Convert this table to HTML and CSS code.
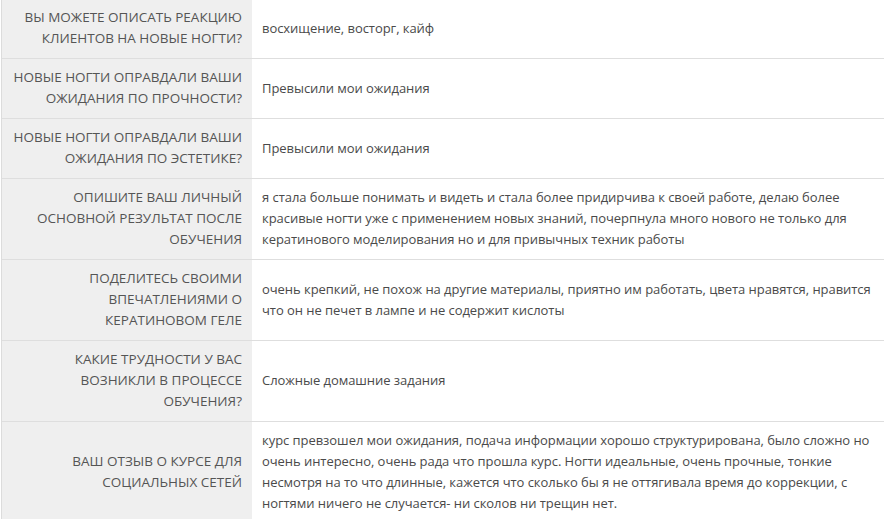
FILE: index.html
```html
<!DOCTYPE html>
<html lang="ru">
<head>
<meta charset="utf-8">
<link rel="stylesheet" href="styles.css">
</head>
<body>
<table class="qa">
  <tr><th class="q">Вы можете описать реакцию клиентов на новые ногти?</th><td class="a">восхищение, восторг, кайф</td></tr>
  <tr><th class="q">Новые ногти оправдали ваши ожидания по прочности?</th><td class="a">Превысили мои ожидания</td></tr>
  <tr><th class="q">Новые ногти оправдали ваши ожидания по эстетике?</th><td class="a">Превысили мои ожидания</td></tr>
  <tr><th class="q">Опишите ваш личный основной результат после обучения</th><td class="a">я стала больше понимать и видеть и стала более придирчива к своей работе, делаю более красивые ногти уже с применением новых знаний, почерпнула много нового не только для кератинового моделирования но и для привычных техник работы</td></tr>
  <tr><th class="q">Поделитесь своими впечатлениями о кератиновом геле</th><td class="a">очень крепкий, не похож на другие материалы, приятно им работать, цвета нравятся, нравится что он не печет в лампе и не содержит кислоты</td></tr>
  <tr><th class="q">Какие трудности у вас возникли в процессе обучения?</th><td class="a">Сложные домашние задания</td></tr>
  <tr><th class="q">Ваш отзыв о курсе для социальных сетей</th><td class="a">курс превзошел мои ожидания, подача информации хорошо структурирована, было сложно но очень интересно, очень рада что прошла курс. Ногти идеальные, очень прочные, тонкие несмотря на то что длинные, кажется что сколько бы я не оттягивала время до коррекции, с ногтями ничего не случается- ни сколов ни трещин нет.</td></tr>
</table>
</body>
</html>
```

FILE: styles.css
```css
html, body {
  margin: 0;
  padding: 0;
  background: #ffffff;
}
body {
  padding-left: 1px;
  font-family: "Open Sans", "Liberation Sans", sans-serif;
  color: #4a4a4a;
}
.qa {
  border-collapse: collapse;
  width: 883px;
  margin-top: -2px;
}
.qa tr {
  border-top: 1px solid #dedede;
}
.qa th, .qa td {
  vertical-align: middle;
  line-height: 21px;
  padding: 8px 10px 9px 10px;
}
.q {
  width: 230px;
  background: #efefef;
  border-left: 1px solid #dcdcdc;
  text-align: right;
  text-transform: uppercase;
  font-weight: 400;
  font-size: 13.5px;
  color: #555555;
}
.qa .a {
  padding-right: 0;
  text-align: left;
  font-size: 13px;
  letter-spacing: -0.05px;
  color: #4a4a4a;
}
```
